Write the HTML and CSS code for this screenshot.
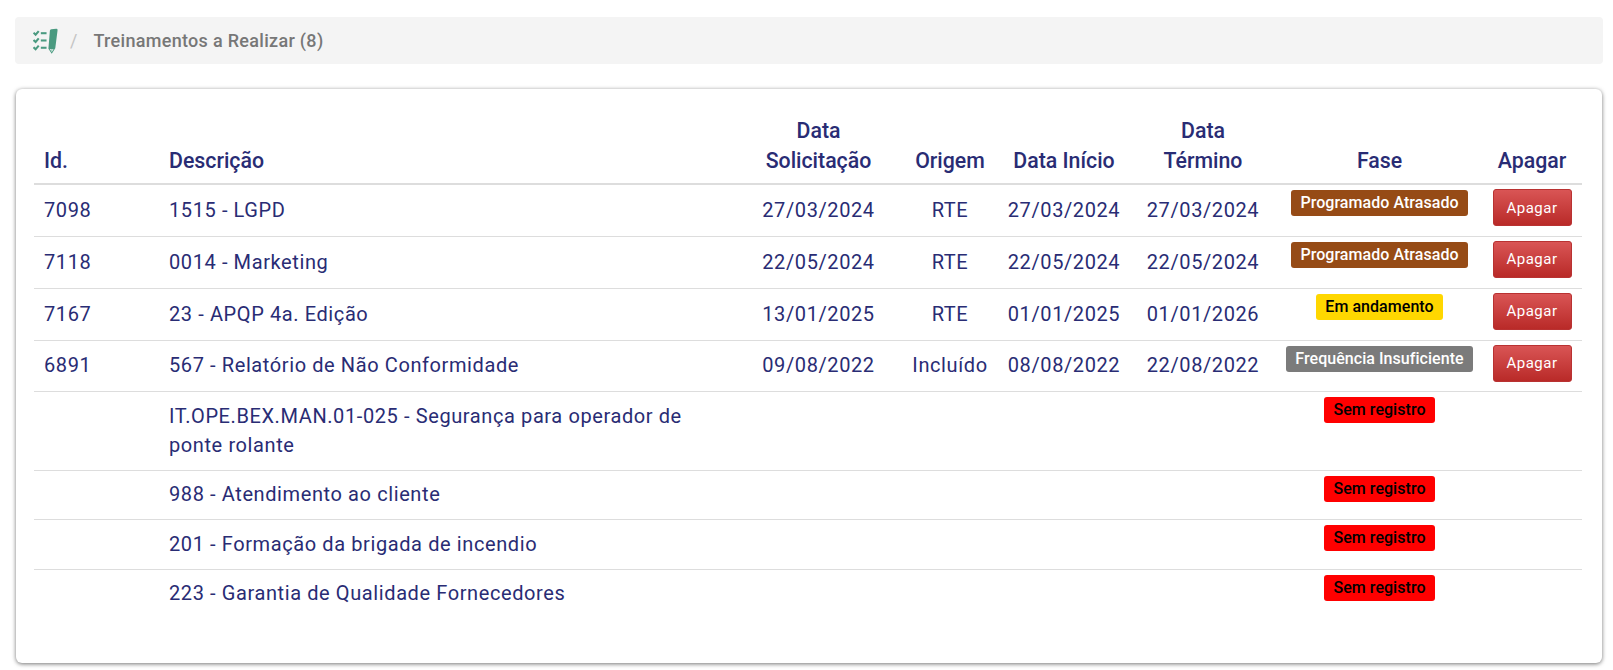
FILE: index.html
```html
<!DOCTYPE html>
<html lang="pt-BR">
<head>
<meta charset="utf-8">
<title>Treinamentos a Realizar</title>
<link rel="stylesheet" href="styles.css">
</head>
<body>
<nav class="crumb">
  <svg class="crumb-icon" width="25" height="26" viewBox="0 0 24 25" aria-hidden="true">
    <g fill="none" stroke="#4a9a80" stroke-width="2">
      <path d="M.5 4.500l2 2 3-3.500"/><path d="M.5 11.500l2 2 3-3.500"/><path d="M.5 18.500l2 2 3-3.500"/>
      <path d="M7.500 5h5.500"/><path d="M7.500 12h5.500"/><path d="M7.500 19h5.500"/>
    </g>
    <path fill="#4a9a80" d="M17.500 1.300L22.300.8Q23.800.7 23.600 2.200L21.400 19.500 18 24.800 14.800 20 16.200 2.600Q16.300 1.400 17.500 1.300Z"/>
    <path fill="#dff0ea" d="M16 20.200l3.800.3-1.800 2.600z"/>
    <path fill="#4a9a80" d="M17.300 20.800l1.300.1-.6 1z"/>
  </svg>
  <span class="crumb-sep">/</span>
  <span class="crumb-title">Treinamentos a Realizar (8)</span>
</nav>
<main class="card">
  <table class="grid">
    <colgroup>
      <col class="c-id"><col class="c-desc"><col class="c-sol"><col class="c-ori"><col class="c-ini"><col class="c-ter"><col class="c-fase"><col class="c-del">
    </colgroup>
    <thead>
      <tr>
        <th>Id.</th><th>Descrição</th><th class="mid">Data Solicitação</th><th class="mid">Origem</th><th class="mid">Data Início</th><th class="mid narrow">Data Término</th><th class="mid">Fase</th><th class="mid">Apagar</th>
      </tr>
    </thead>
    <tbody>
      <tr class="r-a"><td>7098</td><td>1515 - LGPD</td><td class="mid">27/03/2024</td><td class="mid">RTE</td><td class="mid">27/03/2024</td><td class="mid">27/03/2024</td><td class="mid top"><span class="tag brown">Programado Atrasado</span></td><td class="mid act"><button class="del">Apagar</button></td></tr>
      <tr class="r-a"><td>7118</td><td>0014 - Marketing</td><td class="mid">22/05/2024</td><td class="mid">RTE</td><td class="mid">22/05/2024</td><td class="mid">22/05/2024</td><td class="mid top"><span class="tag brown">Programado Atrasado</span></td><td class="mid act"><button class="del">Apagar</button></td></tr>
      <tr class="r-a"><td>7167</td><td>23 - APQP 4a. Edição</td><td class="mid">13/01/2025</td><td class="mid">RTE</td><td class="mid">01/01/2025</td><td class="mid">01/01/2026</td><td class="mid top"><span class="tag yellow">Em andamento</span></td><td class="mid act"><button class="del">Apagar</button></td></tr>
      <tr class="r-a r-d"><td>6891</td><td>567 - Relatório de Não Conformidade</td><td class="mid">09/08/2022</td><td class="mid">Incluído</td><td class="mid">08/08/2022</td><td class="mid">22/08/2022</td><td class="mid top"><span class="tag gray">Frequência Insuficiente</span></td><td class="mid act"><button class="del">Apagar</button></td></tr>
      <tr class="r-b r-e"><td></td><td>IT.OPE.BEX.MAN.01-025 - Segurança para operador de ponte rolante</td><td></td><td></td><td></td><td></td><td class="mid top"><span class="tag red">Sem registro</span></td><td></td></tr>
      <tr class="r-b"><td></td><td>988 - Atendimento ao cliente</td><td></td><td></td><td></td><td></td><td class="mid top"><span class="tag red">Sem registro</span></td><td></td></tr>
      <tr class="r-b r-c"><td></td><td>201 - Formação da brigada de incendio</td><td></td><td></td><td></td><td></td><td class="mid top"><span class="tag red">Sem registro</span></td><td></td></tr>
      <tr class="r-b last"><td></td><td>223 - Garantia de Qualidade Fornecedores</td><td></td><td></td><td></td><td></td><td class="mid top"><span class="tag red">Sem registro</span></td><td></td></tr>
    </tbody>
  </table>
</main>
</body>
</html>
```
FILE: styles.css
```css
* { box-sizing: border-box; }
html, body { margin: 0; padding: 0; background: #fff; }
body {
  padding: 17px 10px 0 15px;
  height: 670px;
  overflow: hidden;
  font-family: Roboto, "Liberation Sans", sans-serif;
  color: #292c74;
}
.crumb {
  display: flex;
  align-items: center;
  height: 47px;
  padding-left: 18px;
  background: #f4f4f4;
  border-radius: 4px;
}
.crumb-icon { flex: none; }
.crumb-sep { margin: 0 16px 0 12px; color: #c4c4c4; font-size: 18px; }
.crumb-title { padding-bottom: 1px; font-size: 18px; font-weight: 500; color: #777; letter-spacing: 0.3px; }
.card {
  margin-top: 25px;
  margin-left: 1px;
  margin-right: 1px;
  height: 574px;
  padding: 19px 20px 0 18px;
  background: #fff;
  border-radius: 6px;
  box-shadow: 0 1px 4px rgba(0,0,0,.55);
}
.grid { width: 1548px; border-collapse: collapse; table-layout: fixed; }
.c-id { width: 125px; }
.c-desc { width: 577px; }
.c-sol { width: 165px; }
.c-ori { width: 98px; }
.c-ini { width: 130px; }
.c-ter { width: 148px; }
.c-fase { width: 205px; }
.c-del { width: 100px; }
th {
  padding: 7px 10px;
  height: 76px;
  vertical-align: bottom;
  text-align: left;
  font-size: 21.3px;
  line-height: 30px;
  font-weight: 500;
  border-bottom: 2px solid #ddd;
}
td {
  padding: 0 10px;
  font-size: 20px;
  line-height: 29px;
  letter-spacing: 0.6px;
  border-bottom: 1px solid #ddd;
  vertical-align: middle;
}
th.mid { text-align: center; }
th.narrow { padding-left: 20px; padding-right: 20px; }
td.mid { text-align: center; padding-left: 4px; padding-right: 4px; }
td.top { vertical-align: top; letter-spacing: 0; padding-top: 5px; }
td.act { vertical-align: top; padding-top: 4px; }
.r-a { height: 52px; }
.r-d { height: 51px; }
.r-b { height: 49px; }
.r-c { height: 50px; }
.r-e { height: 79px; }
.r-b td { padding-top: 9px; padding-bottom: 9px; }
.r-b td.top { padding-top: 5px; }
.r-b.last td { border-bottom: 0; }
.tag {
  display: inline-block;
  vertical-align: top;
  height: 26px;
  padding: 0 9px;
  border-radius: 3px;
  font-size: 16px;
  font-weight: 500;
  line-height: 25px;
  letter-spacing: 0.05px;
}
.brown { background: #964b16; color: #fff; }
.yellow { background: #ffd700; color: #000; }
.gray { background: #7b7b7b; color: #fff; }
.red { background: #ff0000; color: #000; }
.del {
  display: block;
  margin: 0 auto;
  width: 79px;
  height: 37px;
  padding: 0;
  border: 1px solid #b93232;
  border-radius: 3px;
  background: linear-gradient(#d95555, #b92a28);
  color: #fff;
  font-family: Roboto, "Liberation Sans", sans-serif;
  font-size: 15px;
  letter-spacing: 0.5px;
}
```
